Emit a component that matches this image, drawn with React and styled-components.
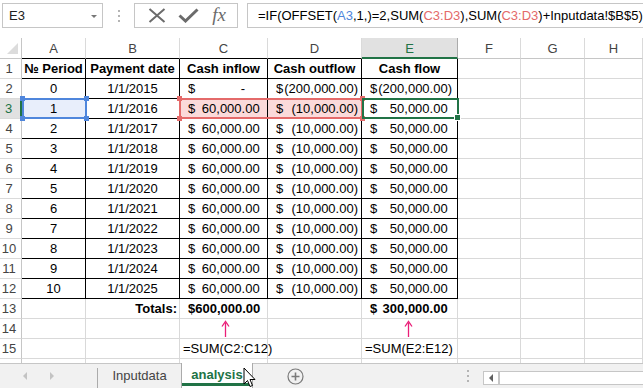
import React from 'react';
import styled, { createGlobalStyle } from 'styled-components';

const GlobalStyle = createGlobalStyle`
  html, body { margin: 0; padding: 0; background: #fff; }
  body { font-family: "Liberation Sans", Arial, sans-serif; }
`;

const GREEN = '#217346';
const BLUE = '#4f86dc';
const RED = '#e46a6a';
const GRID = '#d9d9d9';
const HEADLINE = '#c6c6c6';

const Root = styled.div`
  width: 643px;
  height: 388px;
  overflow: hidden;
  background: #fff;
  display: flex;
  flex-direction: column;
  font-family: "Liberation Sans", Arial, sans-serif;
`;

/* ---------- formula bar ---------- */
const Toolbar = styled.div`
  height: 38px;
  flex: none;
  display: flex;
  align-items: flex-start;
  padding: 3px 0 0 2px;
  box-sizing: border-box;
`;

const Box = styled.div`
  height: 25px;
  box-sizing: border-box;
  border: 1px solid ${HEADLINE};
  background: #fff;
  display: flex;
  align-items: center;
`;

const NameBox = styled(Box)`
  width: 101px;
  padding: 0 5px 0 6px;
  justify-content: space-between;
  font-size: 13px;
  color: #222;
`;

const DropArrow = styled.span`
  width: 0;
  height: 0;
  border-left: 3px solid transparent;
  border-right: 3px solid transparent;
  border-top: 3px solid #777;
  margin-top: 1px;
`;

const Grip = styled.div`
  width: 31px;
  height: 25px;
  display: flex;
  flex-direction: column;
  align-items: center;
  justify-content: center;
  gap: 3px;
  & > i {
    width: 2px;
    height: 2px;
    background: #b4b4b4;
    display: block;
  }
`;

const FxGroup = styled(Box)`
  width: 104px;
  padding-left: 8px;
  gap: 0;
`;

const IconSlot = styled.span`
  width: ${p => p.$w}px;
  display: flex;
  align-items: center;
  justify-content: center;
`;

const FxText = styled.span`
  font-family: "Liberation Serif", "Times New Roman", serif;
  font-style: italic;
  font-size: 19px;
  color: #6b6b6b;
  line-height: 1;
  margin-top: -2px;
`;

const FormulaField = styled(Box)`
  flex: 1;
  margin-left: 9px;
  padding-left: 10px;
  font-size: 13px;
  color: #000;
  white-space: nowrap;
  overflow: hidden;
  border-right: none;
`;

const Ref = styled.span`
  color: ${p => p.$c};
`;

/* ---------- sheet ---------- */
const Sheet = styled.div`
  position: relative;
  height: 325px;
  flex: none;
  overflow: hidden;
  display: grid;
  grid-template-columns: 22px 64px 94px 88px 94px 96px 63px 64px 58px;
  grid-template-rows: 21px;
  grid-auto-rows: 20px;
  font-size: 13px;
`;

const Corner = styled.div`
  box-sizing: border-box;
  border-right: 1px solid ${HEADLINE};
  border-bottom: 1px solid ${HEADLINE};
  display: flex;
  align-items: flex-end;
  justify-content: flex-end;
  padding: 0 3px 4px 0;
`;

const ColHead = styled.div`
  box-sizing: border-box;
  display: flex;
  align-items: center;
  justify-content: center;
  color: ${p => (p.$sel ? GREEN : '#444')};
  background: ${p => (p.$sel ? '#e1e1e1' : '#fff')};
  border-right: 1px solid ${p => (p.$sel ? '#ababab' : '#dadada')};
  border-bottom: ${p => (p.$sel ? `2px solid ${GREEN}` : `1px solid ${p.$table ? '#000' : HEADLINE}`)};
  padding-top: ${p => (p.$sel ? 1 : 0)}px;
`;

const RowHead = styled.div`
  box-sizing: border-box;
  display: flex;
  align-items: center;
  justify-content: center;
  padding-right: 3px;
  color: ${p => (p.$sel ? GREEN : '#444')};
  background: ${p => (p.$sel ? '#e1e1e1' : '#fff')};
  border-right: ${p => (p.$sel ? `2px solid ${GREEN}` : `1px solid ${HEADLINE}`)};
  border-bottom: 1px solid #dadada;
`;

const Cell = styled.div`
  box-sizing: border-box;
  min-width: 0;
  display: flex;
  align-items: center;
  justify-content: ${p => p.$align || 'flex-start'};
  padding: 0 ${p => (p.$pr != null ? p.$pr : 3)}px 0 ${p => (p.$pl != null ? p.$pl : 3)}px;
  border-right: 1px solid ${p => (p.$table ? '#000' : GRID)};
  border-bottom: 1px solid ${p => (p.$table ? '#000' : GRID)};
  background: ${p => p.$fill || 'transparent'};
  font-weight: ${p => (p.$bold ? 700 : 400)};
  white-space: nowrap;
  overflow: visible;
  color: #000;
`;

const AcctWrap = styled.div`
  flex: 1;
  display: flex;
  justify-content: space-between;
  align-items: center;
`;

const Hidden = styled.span`
  visibility: hidden;
`;

const RefFrame = styled.div`
  position: absolute;
  box-sizing: border-box;
  border: 2px solid ${p => p.$c};
  pointer-events: none;
  z-index: 2;
`;

const Handle = styled.span`
  position: absolute;
  width: 5px;
  height: 5px;
  background: ${p => p.$c};
  ${p => (p.$top ? 'top: -4px;' : 'bottom: -4px;')}
  ${p => (p.$left ? 'left: -4px;' : 'right: -4px;')}
`;

const SelFrame = styled.div`
  position: absolute;
  box-sizing: border-box;
  border: 2px solid ${GREEN};
  z-index: 3;
  pointer-events: none;
`;

const FillHandle = styled.span`
  position: absolute;
  right: -4px;
  bottom: -4px;
  width: 5px;
  height: 5px;
  background: ${GREEN};
  border: 1px solid #fff;
`;

const ArrowMark = styled.svg`
  display: block;
  margin: 0 auto;
`;

/* ---------- tab bar ---------- */
const TabBar = styled.div`
  position: relative;
  flex: 1;
  display: flex;
  align-items: stretch;
  background: #f1f1f1;
  border-top: 1px solid ${HEADLINE};
  font-size: 13px;
`;

const NavArea = styled.div`
  width: 97px;
  display: flex;
  align-items: center;
  padding-left: 23px;
  gap: 23px;
  box-sizing: border-box;
`;

const NavTri = styled.span`
  width: 0;
  height: 0;
  border-top: 4px solid transparent;
  border-bottom: 4px solid transparent;
  ${p => (p.$dir === 'left' ? 'border-right: 4px solid #c3c3c3;' : 'border-left: 4px solid #c3c3c3;')}
`;

const TabSep = styled.div`
  width: 1px;
  background: #ababab;
  margin-top: 4px;
`;

const Tab = styled.div`
  width: 83px;
  display: flex;
  align-items: center;
  justify-content: center;
  color: #444;
  padding-bottom: 2px;
  box-sizing: border-box;
`;

const ActiveTab = styled.div`
  position: relative;
  width: 72px;
  margin-top: -1px;
  background: #fff;
  border-left: 1px solid #ababab;
  border-right: 1px solid #ababab;
  box-sizing: border-box;
  display: flex;
  align-items: center;
  justify-content: center;
  padding-bottom: 2px;
  color: ${GREEN};
  font-weight: 700;
  &::after {
    content: '';
    position: absolute;
    left: 0;
    right: 0;
    bottom: 2px;
    height: 3px;
    background: ${GREEN};
  }
`;

const AddBtn = styled.div`
  margin-left: 34px;
  display: flex;
  align-items: center;
`;

const Spacer = styled.div`
  flex: 1;
`;

const VDots = styled.div`
  width: 14px;
  display: flex;
  flex-direction: column;
  align-items: center;
  justify-content: center;
  gap: 3px;
  margin-right: 8px;
  & > i {
    display: block;
    width: 2px;
    height: 2px;
    background: #b4b4b4;
  }
`;

const HScroll = styled.div`
  width: 160px;
  margin: 7px 0 3px 0;
  display: flex;
  border: 1px solid ${HEADLINE};
  border-right: none;
  background: #fff;
  box-sizing: border-box;
`;

const ScrollBtn = styled.div`
  width: 14px;
  display: flex;
  align-items: center;
  justify-content: center;
  border-right: 2px solid #c6c6c6;
`;

const ScrollTri = styled.span`
  width: 0;
  height: 0;
  border-top: 4px solid transparent;
  border-bottom: 4px solid transparent;
  border-right: 4px solid #606060;
`;

const Cursor = styled.svg`
  position: absolute;
  left: 243px;
  top: 3px;
`;

/* ---------- data ---------- */
const data = [
  ['0', '1/1/2015', { dash: true }, { v: '200,000.00', neg: true }, { v: '200,000.00', neg: true }],
  ['1', '1/1/2016', { v: '60,000.00' }, { v: '10,000.00', neg: true }, { v: '50,000.00' }],
];
for (let i = 2; i <= 10; i++) {
  data.push([String(i), `1/1/${2015 + i}`, { v: '60,000.00' }, { v: '10,000.00', neg: true }, { v: '50,000.00' }]);
}

const Acct = ({ v, neg, dash }) => (
  <AcctWrap>
    <span>$</span>
    {dash ? (
      <span>
        -<Hidden>00)</Hidden>
      </span>
    ) : (
      <span>
        {neg ? `(${v})` : v}
        {!neg && <Hidden>)</Hidden>}
      </span>
    )}
  </AcctWrap>
);

const colPadR = [3, 3, 3, 3, 5];

const UpArrow = () => (
  <ArrowMark width="9" height="18" viewBox="0 0 9 18">
    <path d="M4.5 3 V17" stroke="#ea1e78" strokeWidth="1.3" fill="none" />
    <path d="M1 6.5 L4.5 1.5 L8 6.5" stroke="#ea1e78" strokeWidth="1.3" fill="none" />
  </ArrowMark>
);

function renderRow(r) {
  const cells = [];
  const sel = r === 3;
  cells.push(
    <RowHead key={`h${r}`} $sel={sel}>
      {r}
    </RowHead>
  );
  const inTable = r >= 1 && r <= 12;
  for (let c = 0; c < 8; c++) {
    const table = inTable && c <= 4;
    let content = null;
    let props = { $table: table };
    if (r === 1 && c <= 4) {
      const labels = ['№ Period', 'Payment date', 'Cash inflow', 'Cash outflow', 'Cash flow'];
      content = labels[c];
      props = { ...props, $bold: true, $align: 'center', $pl: 1, $pr: 1 };
    } else if (r >= 2 && r <= 12 && c <= 4) {
      const d = data[r - 2][c];
      if (c <= 1) {
        content = d;
        props = { ...props, $align: 'center' };
      } else {
        content = <Acct {...d} />;
        props = { ...props, $pl: 8, $pr: colPadR[c] };
      }
      if (r === 3 && c === 0) props.$fill = '#e8eefb';
      if (r === 3 && (c === 2 || c === 3)) props.$fill = '#fbdada';
    } else if (r === 13) {
      if (c === 1) {
        content = 'Totals:';
        props = { ...props, $bold: true, $align: 'flex-end', $pr: 2 };
      } else if (c === 2) {
        content = <Acct v="600,000.00" />;
        props = { ...props, $bold: true, $pl: 8, $pr: 3 };
      } else if (c === 4) {
        content = <Acct v="300,000.00" />;
        props = { ...props, $bold: true, $pl: 8, $pr: 5 };
      }
    } else if (r === 14 && (c === 2 || c === 4)) {
      content = <UpArrow />;
      props = { ...props, $align: 'center', $pl: c === 2 ? 4 : 0, $pr: c === 2 ? 0 : 2 };
    } else if (r === 15 && (c === 2 || c === 4)) {
      content = c === 2 ? '=SUM(C2:C12)' : '=SUM(E2:E12)';
    }
    cells.push(
      <Cell key={`c${r}-${c}`} {...props}>
        {content}
      </Cell>
    );
  }
  return cells;
}

export default function App() {
  const cols = ['A', 'B', 'C', 'D', 'E', 'F', 'G', 'H'];
  const rows = [];
  for (let r = 1; r <= 16; r++) rows.push(...renderRow(r));

  return (
    <Root>
      <GlobalStyle />
      <Toolbar>
        <NameBox>
          <span>E3</span>
          <DropArrow />
        </NameBox>
        <Grip>
          <i />
          <i />
          <i />
        </Grip>
        <FxGroup>
          <IconSlot $w={28}>
            <svg width="18" height="15" viewBox="0 0 18 15">
              <path d="M1.5 1 L16.5 14 M16.5 1 L1.5 14" stroke="#6b6b6b" strokeWidth="2" fill="none" />
            </svg>
          </IconSlot>
          <IconSlot $w={34}>
            <svg width="21" height="15" viewBox="0 0 21 15">
              <path d="M1.5 7.5 L7.5 13 L19.5 1.5" stroke="#6b6b6b" strokeWidth="3" fill="none" />
            </svg>
          </IconSlot>
          <IconSlot $w={28}>
            <FxText>fx</FxText>
          </IconSlot>
        </FxGroup>
        <FormulaField>
          <span>=IF(OFFSET(</span>
          <Ref $c={BLUE}>A3</Ref>
          <span>,1,)=2,SUM(</span>
          <Ref $c={RED}>C3:D3</Ref>
          <span>),SUM(</span>
          <Ref $c={RED}>C3:D3</Ref>
          <span>)+Inputdata!$B$5)</span>
        </FormulaField>
      </Toolbar>

      <Sheet>
        <Corner>
          <svg width="11" height="11" viewBox="0 0 11 11">
            <path d="M11 0 L11 11 L0 11 Z" fill="#dcdcdc" />
          </svg>
        </Corner>
        {cols.map((c, i) => (
          <ColHead key={c} $sel={c === 'E'} $table={i <= 4}>
            {c}
          </ColHead>
        ))}
        {rows}

        <RefFrame $c={BLUE} style={{ left: 22, top: 60, width: 65, height: 21 }}>
          <Handle $c={BLUE} $top $left />
          <Handle $c={BLUE} $top />
          <Handle $c={BLUE} $left />
          <Handle $c={BLUE} />
        </RefFrame>
        <RefFrame $c={RED} style={{ left: 179, top: 60, width: 184, height: 21 }}>
          <Handle $c={RED} $top $left />
          <Handle $c={RED} $top />
          <Handle $c={RED} $left />
          <Handle $c={RED} />
        </RefFrame>
        <SelFrame style={{ left: 362, top: 60, width: 97, height: 21 }}>
          <FillHandle />
        </SelFrame>
      </Sheet>

      <TabBar>
        <NavArea>
          <NavTri $dir="left" />
          <NavTri $dir="right" />
        </NavArea>
        <TabSep />
        <Tab>Inputdata</Tab>
        <ActiveTab>analysis</ActiveTab>
        <AddBtn>
          <svg width="17" height="17" viewBox="0 0 17 17">
            <circle cx="8.5" cy="8.5" r="7.5" stroke="#7a7a7a" strokeWidth="1.2" fill="none" />
            <path d="M8.5 4.5 V12.5 M4.5 8.5 H12.5" stroke="#7a7a7a" strokeWidth="1.6" />
          </svg>
        </AddBtn>
        <Spacer />
        <VDots>
          <i />
          <i />
          <i />
        </VDots>
        <HScroll>
          <ScrollBtn>
            <ScrollTri />
          </ScrollBtn>
        </HScroll>
        <Cursor width="13" height="22" viewBox="0 0 13 22">
          <path d="M1 1 L1 17 L4.5 13.5 L7 19.5 L9.5 18.5 L7 12.5 L12 12.5 Z" fill="#fff" stroke="#000" strokeWidth="1" />
        </Cursor>
      </TabBar>
    </Root>
  );
}
